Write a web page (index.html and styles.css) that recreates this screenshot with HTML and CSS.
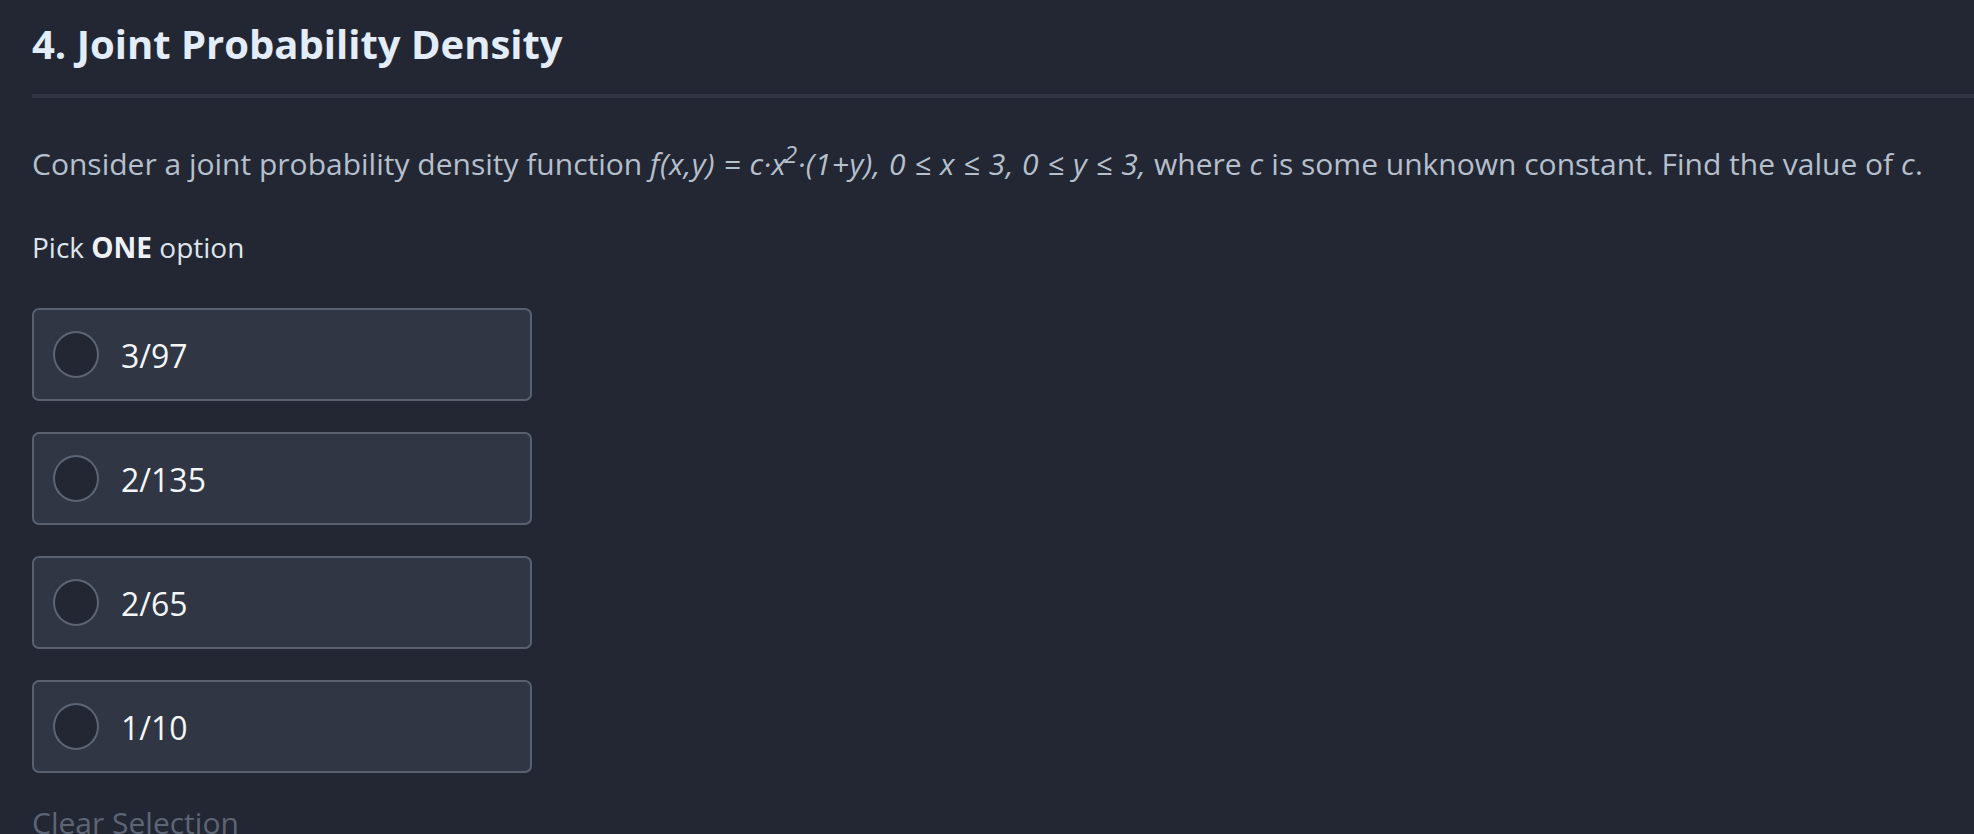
FILE: index.html
```html
<!DOCTYPE html>
<html lang="en">
<head>
<meta charset="utf-8">
<title>Joint Probability Density</title>
<link rel="stylesheet" href="styles.css">
</head>
<body>
<main class="page">
  <h1 class="title">4. Joint Probability Density</h1>
  <p class="question">Consider a joint probability density function <em class="math">f(x,y) = c·x<sup>2</sup>·(1+y), 0 ≤ x ≤ 3, 0 ≤ y ≤ 3,</em> where <em class="math">c</em> is some unknown constant. Find the value of <em class="math">c</em>.</p>
  <p class="pick">Pick <strong>ONE</strong> option</p>
  <div class="options">
    <label class="option"><span class="radio"></span><span class="option-text">3/97</span></label>
    <label class="option"><span class="radio"></span><span class="option-text">2/135</span></label>
    <label class="option"><span class="radio"></span><span class="option-text">2/65</span></label>
    <label class="option"><span class="radio"></span><span class="option-text">1/10</span></label>
  </div>
  <div class="clear">Clear Selection</div>
</main>
</body>
</html>
```

FILE: styles.css
```css
html, body {
  margin: 0;
  padding: 0;
  background: #222733;
  height: 100%;
  overflow: hidden;
}

body {
  font-family: "Open Sans", "Noto Sans", sans-serif;
  color: #b6bfcc;
}

.page {
  padding-left: 32px;
}

.title {
  margin: 0;
  padding: 18px 0 24px;
  font-size: 40px;
  line-height: 52px;
  font-weight: 700;
  color: #e3edf9;
  border-bottom: 4px solid #2f3542;
}

.question {
  margin: 46px 0 0;
  font-size: 30px;
  line-height: 40px;
  color: #b6bfcc;
  white-space: nowrap;
}

.math {
  font-style: italic;
  letter-spacing: 0.5px;
}

.math sup {
  font-size: 0.8em;
  line-height: 0;
  vertical-align: 0.5em;
  margin-left: -0.1em;
}

.pick {
  margin: 44px 0 0;
  font-size: 28px;
  line-height: 38px;
  color: #dfe4ec;
}

.pick strong {
  font-weight: 700;
  color: #eef2f8;
}

.options {
  margin-top: 42px;
  display: flex;
  flex-direction: column;
  gap: 31px;
}

.option {
  box-sizing: border-box;
  width: 500px;
  height: 93px;
  display: flex;
  align-items: center;
  gap: 22px;
  padding-left: 19px;
  background: #303643;
  border: 2px solid #596171;
  border-radius: 7px;
}

.radio {
  box-sizing: border-box;
  width: 46px;
  height: 47px;
  border-radius: 50%;
  border: 2px solid #5d6575;
  background: #222733;
  flex: none;
}

.option-text {
  font-size: 32px;
  line-height: 40px;
  padding-top: 3px;
  color: #f4f6fa;
}

.clear {
  margin-top: 30px;
  font-size: 30px;
  line-height: 40px;
  color: #5d6575;
}
```
